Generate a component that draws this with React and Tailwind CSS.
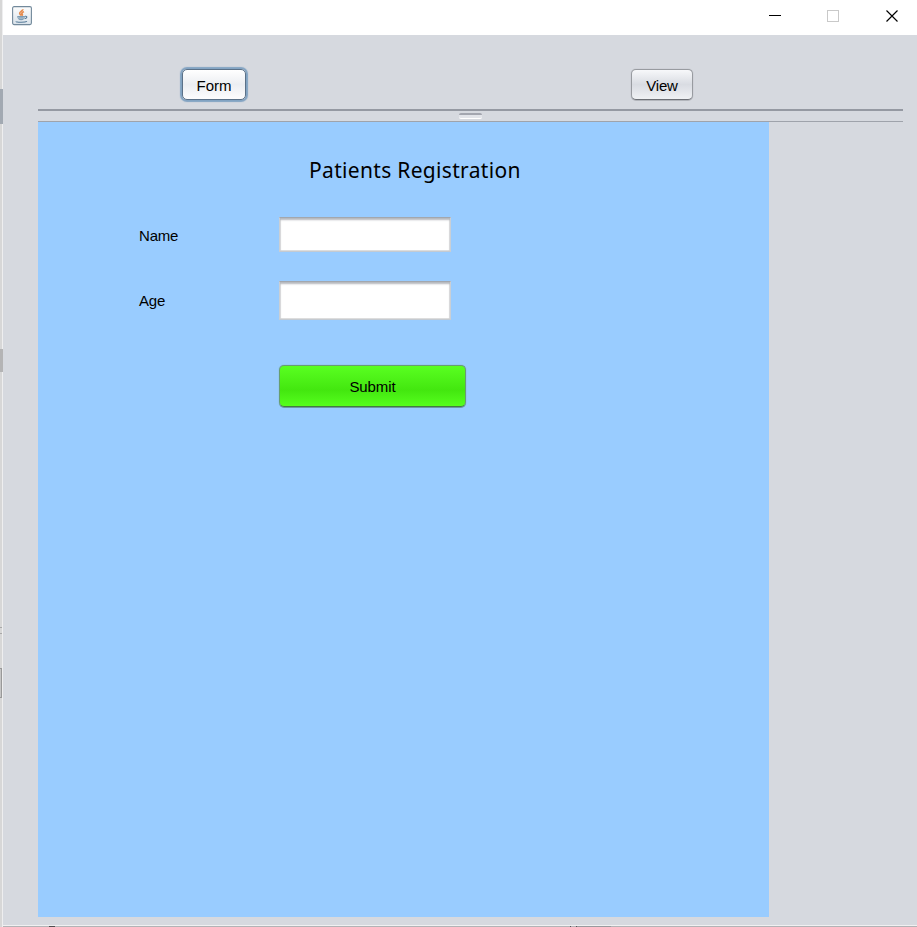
const sans = "font-['Liberation_Sans',Arial,sans-serif]";

function JavaIcon() {
  return (
    <svg width="20" height="20" viewBox="0 0 20 20" fill="none">
      <defs>
        <linearGradient id="tile" x1="0" y1="0" x2="0" y2="1">
          <stop offset="0" stopColor="#fdfdfd" />
          <stop offset="1" stopColor="#d9e2ea" />
        </linearGradient>
      </defs>
      <rect x="0.6" y="0.6" width="18.8" height="18" rx="1.5" fill="url(#tile)" stroke="#72899b" strokeWidth="1.1" />
      <path d="M10.800 3.200c.5 1.500-3.500 2.300-3.100 4.200.2 1.100 1.200 1.400 1.300 2.300M12 5.800c-1.800.5-2.700 1.300-1.900 2.300.5.600.2 1.100-.4 1.500" stroke="#e58a4c" strokeWidth="1.700" />
      <path d="M5.200 10h7.800c0 2.500-1.300 4.200-3.900 4.200s-3.900-1.700-3.900-4.200z" fill="#7f9db4" />
      <path d="M6 11.700c2 .6 4.500.6 6.300 0" stroke="#c3d1dc" strokeWidth="0.800" />
      <path d="M13 10.300c2.600-.6 2.400 2-.3 2.400M4.300 15.300c-.9 1.200 8.600 1.400 10.700.1" stroke="#557a98" strokeWidth="1.100" />
    </svg>
  );
}

function TitleBar() {
  return (
    <header className="flex h-[35px] shrink-0 items-start bg-white pt-[6px] pl-[9px]">
      <JavaIcon />
      <div className="ml-auto flex items-center gap-[45px] pt-[3px] pr-[18px]">
        <svg width="14" height="14" shapeRendering="crispEdges">
          <path d="M1 6.500h12" stroke="#000" />
        </svg>
        <svg width="13" height="14" shapeRendering="crispEdges">
          <rect x="0.500" y="1.500" width="11" height="11" fill="none" stroke="#c9c9c9" />
        </svg>
        <svg width="14" height="14">
          <path d="M1.500 1.500l11 11M12.500 1.500l-11 11" stroke="#000" strokeWidth="1.150" />
        </svg>
      </div>
    </header>
  );
}

function Field({ label, size, gap, offset }) {
  return (
    <label className={`flex items-center ${gap}`}>
      <span className={`w-[140px] text-[15px] leading-5 tracking-[-0.2px] ${offset}`}>{label}</span>
      <input
        className={`w-[172px] border border-x-[#c9cfd6] border-t-[#a2a7ae] border-b-[#c4cad1] bg-white shadow-[inset_0_2px_2px_#b5b8bd,inset_0_-1px_0_#dddddd,inset_1px_0_0_#e6e6e6,inset_-1px_0_0_#e6e6e6] outline-none ${size}`}
      />
    </label>
  );
}

export default function App() {
  return (
    <div className={`flex h-[927px] w-[917px] overflow-hidden bg-[#d6d9df] text-black ${sans}`}>
      <div className="flex w-[3px] shrink-0 flex-col border-r border-[#eeeeef] bg-[#d7d7d7]">
        <div className="mt-[89px] h-[35px] w-[3px] bg-[#a2a9b2]" />
        <div className="mt-[225px] h-[23px] w-[3px] bg-[#b4b4b5]" />
        <div className="mt-[255px] h-[7px] border-y border-[#a8a8a8]" />
        <div className="mt-[34px] h-[30px] w-[2px] border-y border-r border-[#999999] bg-[#c5c5c5]" />
      </div>
      <div className="flex min-w-0 flex-1 flex-col">
        <TitleBar />
        <main className="flex flex-1 flex-col pl-[35px]">
          <div className="flex h-[74px] items-start pt-[34px] pr-[224px]">
            <button className="ml-[144px] h-[31px] w-[64px] rounded-[5px] border border-[#5b7188] bg-linear-to-b from-white via-[#eceef2] to-[#fdfdfe] pt-[2px] text-[15px] leading-none shadow-[0_0_1px_2px_#82a3c2]">
              Form
            </button>
            <button className="ml-auto h-[31px] w-[62px] rounded-[5px] border-[1.5px] border-[#989ba0] border-b-[#6c6f75] bg-linear-to-b from-[#f7f8fa] via-[#d9dce2] to-[#eff1f4] pt-[2px] text-[15px] leading-none tracking-[-0.2px] shadow-[0_0_1px_#989ba0,0_1px_0_#b5b8be]">
              View
            </button>
          </div>
          <div className="mr-[14px] flex h-[13px] justify-center border-t-2 border-b border-t-[#9599a2] border-b-[#9fa3ab] pt-[2px]">
            <div className="h-[6px] w-[23px] rounded-[2px] border-t-2 border-b border-t-[#a3a6af] border-b-white bg-[#e2e4e9]" />
          </div>
          <section className="flex h-[795px] w-[731px] flex-col bg-[#99ccff] pl-[101px]">
            <h1 className="mt-[32px] ml-[170px] h-[33px] font-['Noto_Sans',sans-serif] text-[21px] leading-[32px] tracking-[0.32px]">
              Patients Registration
            </h1>
            <Field label="Name" size="h-[35px]" gap="mt-[30px]" offset="pt-[3px]" />
            <Field label="Age" size="h-[39px]" gap="mt-[29px]" offset="pt-[1px]" />
            <button className="mt-[45px] ml-[140px] h-[42px] w-[187px] rounded-[5px] border border-[#679d71] border-b-[#427c42] bg-linear-to-b from-[#59ff20] from-0% via-[#43e70f] via-60% to-[#55ff1d] to-100% text-[15px] leading-none tracking-[-0.1px] shadow-[0_0_1px_#679d71,0_1px_0_#6c98a6]">
              Submit
            </button>
          </section>
        </main>
        <footer className="flex h-[2px] shrink-0 border-t border-[#f1f1f2] bg-[#b2b3b6]">
          <div className="ml-[46px] h-px w-[6px] bg-[#4d4d50]" />
          <div className="ml-[515px] h-px w-[7px] border-x border-[#55555a]" />
          <div className="h-px w-[34px] bg-[#999a9e]" />
        </footer>
      </div>
    </div>
  );
}
